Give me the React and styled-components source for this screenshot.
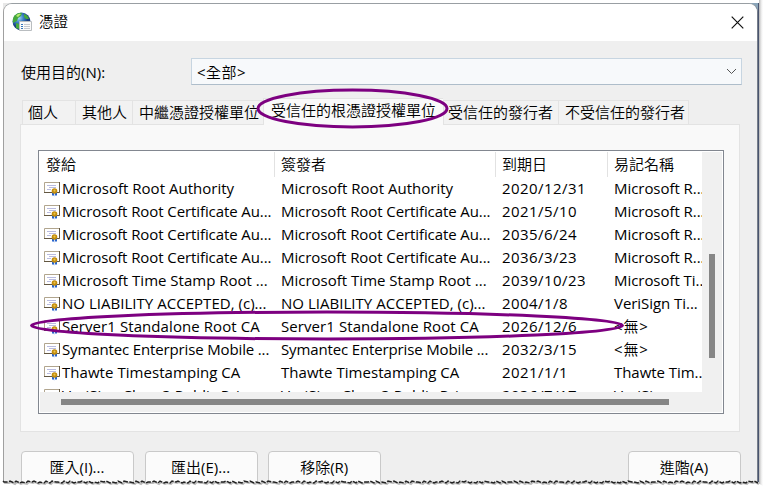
import React from "react";
import styled, { createGlobalStyle } from "styled-components";

const GlobalStyle = createGlobalStyle`
  * { box-sizing: border-box; }
  html, body { margin: 0; width: 763px; height: 486px; overflow: hidden; background: #fff; }
  body { font-family: "Open Sans", "Noto Sans CJK TC", sans-serif; font-size: 15px; font-weight: 350; color: #000; }
`;

const Page = styled.div`
  position: relative;
  width: 763px;
  height: 486px;
  padding: 3px 0 0 3px;
  overflow: hidden;
  background: linear-gradient(90deg, transparent 759px, #b5b5b5 759px, #e9e9e9 761px, #fff 763px);
`;
const Backdrop = styled.div`
  width: 756px;
  height: 479px;
  background: linear-gradient(90deg, #e8e8e8 300px, #8aa5b9 700px);
  border-right: 1px solid #49546f;
`;
const Window = styled.div`
  width: 755px;
  height: 479px;
  overflow: hidden;
  border: 1px solid #a0a0a0;
  border-top-color: #999fa3;
  border-right-color: #777f8b;
  border-bottom: 0;
  border-radius: 9px 9px 0 0;
  background: #efefef;
`;
const TitleBar = styled.header`
  display: flex;
  align-items: center;
  height: 37px;
  padding: 0 13px 0 8px;
  background: #fff;
`;
const Title = styled.h1`
  flex: 1;
  margin: -2px 0 0 6px;
  font-size: 14.5px;
  line-height: 20px;
  font-weight: 350;
`;
const CloseButton = styled.button`
  display: flex;
  padding: 0;
  border: 0;
  background: none;
`;
const Latin = styled.span`
  font-weight: 400;
`;
const PurposeRow = styled.div`
  display: flex;
  align-items: center;
  height: 27px;
  margin: 17px 14px 0 17px;
`;
const Label = styled.label`
  width: 170px;
  margin-top: -1px;
`;
const Select = styled.div`
  display: flex;
  align-items: center;
  justify-content: space-between;
  width: 551px;
  height: 27px;
  padding: 0 4px 1px 5px;
  border: 1px solid #c7d5e1;
  border-bottom-color: #aebdca;
  background: #f7f9fb;
  letter-spacing: 0.5px;
`;
const Tabs = styled.nav`
  display: flex;
  align-items: flex-end;
  height: 25px;
  margin: 14px 0 0 18px;
`;
const Tab = styled.div`
  flex: none;
  width: ${(p) => p.$width}px;
  height: ${(p) => (p.$active ? 27 : 24)}px;
  margin-bottom: ${(p) => (p.$active ? -1 : 0)}px;
  padding-left: ${(p) => p.$inset}px;
  border: solid #e3e3e3;
  border-width: 1px ${(p) => (p.$last ? 1 : 0)}px 0 1px;
  background: ${(p) => (p.$active ? "#f9f9f9" : "#f2f2f2")};
  line-height: 22px;
  white-space: nowrap;
  position: relative;
  z-index: ${(p) => (p.$active ? 1 : 0)};
`;
const Panel = styled.section`
  width: 720px;
  height: 308px;
  margin-left: 16px;
  padding: 25px 0 0 17px;
  border: 1px solid #e3e3e3;
  background: #f9f9f9;
`;
const List = styled.div`
  display: grid;
  grid-template-columns: 662px 20px;
  grid-template-rows: 240px 20px;
  width: 686px;
  height: 264px;
  padding: 1px;
  border: 1px solid #828790;
  background: #fff;
`;
const Viewport = styled.div`
  overflow: hidden;
`;
const Columns = styled.div`
  display: grid;
  grid-template-columns: 235px 221px 112px 94px;
`;
const HeaderRow = styled(Columns)`
  height: 25px;
`;
const HeaderCell = styled.div`
  padding-left: 6px;
  border-right: ${(p) => (p.$last ? 0 : 1)}px solid #e2e2e2;
  line-height: 25px;
  white-space: nowrap;
`;
const Row = styled(Columns)`
  height: 23px;
`;
const Cell = styled.div`
  display: flex;
  align-items: center;
  min-width: 0;
  padding-left: ${(p) => (p.$icon ? 4 : 6)}px;
  line-height: 23px;
  white-space: nowrap;
  overflow: hidden;
  font-weight: 400;
  letter-spacing: ${(p) => p.$spacing || 0}px;
`;
const NoneText = styled.span`
  font-weight: 350;
`;
const ScrollTrackY = styled.div`
  padding: 102px 0 0 7px;
  background: #f0f0f0;
`;
const ScrollTrackX = styled.div`
  grid-column: 1 / 3;
  padding: 7px 0 0 21px;
  background: #f0f0f0;
`;
const Thumb = styled.div`
  width: ${(p) => p.$width}px;
  height: ${(p) => p.$height}px;
  background: #868686;
`;
const Actions = styled.footer`
  display: flex;
  gap: 10.6px;
  margin: 19px 16px 0 17px;
`;
const Button = styled.button`
  width: 113px;
  height: 36px;
  padding: 0 1px 5px 0;
  border: 1px solid #c9c9c9;
  border-radius: 4px;
  background: #fbfbfb;
  color: #000;
  font: inherit;
  &:last-child { margin-left: auto; }
`;
const Annotations = styled.svg`
  position: absolute;
  inset: 0;
  z-index: 2;
  pointer-events: none;
`;

const GlobeIcon = () => (
  <svg width="21" height="21" viewBox="0 0 21 21">
    <defs>
      <radialGradient id="ocean" cx=".35" cy=".3">
        <stop offset="0" stopColor="#a9dcf7" />
        <stop offset=".5" stopColor="#3d83c7" />
        <stop offset="1" stopColor="#173d80" />
      </radialGradient>
    </defs>
    <circle cx="9.5" cy="9.5" r="9" fill="url(#ocean)" />
    <path d="M2 4Q6 0 10 1L9 4 6 6 5 9 1 11Q0 7 2 4ZM12 2Q16 3 17 7L14 7 12 5ZM4 11L7 12 7 17 4 16Z" fill="#45a83c" />
    <path d="M4 4Q6 1 9 2L6 5Z" fill="#b8eb70" />
    <path d="M7.500 9.500h12v9h-12z" fill="#fafafa" stroke="#b9bdc0" />
    <path d="M9 12.500h2M9 14.500h2M9 16.500h2" stroke="#3677bd" />
    <path d="M12 12.500h6M12 14.500h6M12 16.500h6" stroke="#c5c8ce" />
  </svg>
);

const CertificateSvg = styled.svg`
  flex: none;
`;
const CertificateIcon = () => (
  <CertificateSvg width="18" height="16" viewBox="0 0 18 16">
    <path d="M.5 1.500h15v10H.5z" fill="#fff" stroke="#b1a58e" />
    <path d="M0 11.500h15.500V1" fill="none" stroke="#625641" />
    <path d="M3 4.500h9M5 6.500h7M3 8.500h4" stroke="#b9bbdf" />
    <path d="M8 11h2.200v4.500L9 14l-1 1zM11 11h2v4l-1-1-1 1z" fill="#2864cc" />
    <circle cx="10.500" cy="10" r="2.800" fill="#c18b0b" />
    <circle cx="10.500" cy="9.700" r="1.100" fill="#ebc34d" />
  </CertificateSvg>
);

const tabs = [
  { name: "個人", width: 53, inset: 5 },
  { name: "其他人", width: 57, inset: 6 },
  { name: "中繼憑證授權單位", width: 131, inset: 6 },
  { name: "受信任的根憑證授權單位", width: 180, inset: 7, active: true },
  { name: "受信任的發行者", width: 115, inset: 4 },
  { name: "不受信任的發行者", width: 131, inset: 6, last: true },
];

const none = <>&lt;<NoneText>無</NoneText>&gt;</>;

const rows = [
  ["Microsoft Root Authority", "2020/12/31", "Microsoft R...", 0.02],
  ["Microsoft Root Certificate Au...", "2021/5/10", "Microsoft R...", -0.09],
  ["Microsoft Root Certificate Au...", "2035/6/24", "Microsoft R...", -0.09],
  ["Microsoft Root Certificate Au...", "2036/3/23", "Microsoft R...", -0.09],
  ["Microsoft Time Stamp Root ...", "2039/10/23", "Microsoft Ti...", 0],
  ["NO LIABILITY ACCEPTED, (c)...", "2004/1/8", "VeriSign Ti...", 0.03],
  ["Server1 Standalone Root CA", "2026/12/6", none, 0.08],
  ["Symantec Enterprise Mobile ...", "2032/3/15", none, -0.14],
  ["Thawte Timestamping CA", "2021/1/1", "Thawte Tim...", 0.05],
  ["VeriSign Class 3 Public Pri...", "2036/7/17", "VeriSign", 0],
];

const actions = [
  ["匯入", "(I)..."],
  ["匯出", "(E)..."],
  ["移除", "(R)"],
  ["進階", "(A)"],
];

const tornEdge = Array.from({ length: 126 }, (_, i) => {
  const x = 4 + i * 6;
  return `L${x} ${481 + (i % 3 === 0 ? 1 : 0)}L${x + 4} ${483 - (i % 4 === 0 ? 1 : 0)}`;
}).join("");

export default function App() {
  return (
    <>
      <GlobalStyle />
      <Page>
        <Backdrop>
          <Window>
            <TitleBar>
              <GlobeIcon />
              <Title>憑證</Title>
              <CloseButton aria-label="關閉">
                <svg width="13" height="13" viewBox="0 0 13 13">
                  <path d="M.7.7l11.600 11.600M12.300.7L.7 12.300" stroke="#111" strokeWidth="1.200" />
                </svg>
              </CloseButton>
            </TitleBar>
            <PurposeRow>
              <Label>使用目的<Latin>(N):</Latin></Label>
              <Select>
                <span><Latin>&lt;</Latin>全部<Latin>&gt;</Latin></span>
                <svg width="11" height="7" viewBox="0 0 11 7">
                  <path d="M1 1l4.500 4.500L10 1" fill="none" stroke="#555" />
                </svg>
              </Select>
            </PurposeRow>
            <Tabs>
              {tabs.map((t) => (
                <Tab key={t.name} $width={t.width} $inset={t.inset} $active={t.active} $last={t.last}>
                  {t.name}
                </Tab>
              ))}
            </Tabs>
            <Panel>
              <List>
                <Viewport>
                  <HeaderRow>
                    {["發給", "簽發者", "到期日", "易記名稱"].map((h, i) => (
                      <HeaderCell key={h} $last={i === 3}>{h}</HeaderCell>
                    ))}
                  </HeaderRow>
                  {rows.map(([name, date, friendly, spacing], i) => (
                    <Row key={i}>
                      <Cell $icon $spacing={spacing}><CertificateIcon />{name}</Cell>
                      <Cell $spacing={spacing}>{name}</Cell>
                      <Cell $spacing={0.45}>{date}</Cell>
                      <Cell $spacing={friendly === none ? 0.8 : -0.05}>{friendly}</Cell>
                    </Row>
                  ))}
                </Viewport>
                <ScrollTrackY><Thumb $width={6} $height={104} /></ScrollTrackY>
                <ScrollTrackX><Thumb $width={608} $height={6} /></ScrollTrackX>
              </List>
            </Panel>
            <Actions>
              {actions.map(([text, key]) => (
                <Button key={text}>{text}<Latin>{key}</Latin></Button>
              ))}
            </Actions>
          </Window>
        </Backdrop>
        <Annotations width="763" height="486" viewBox="0 0 763 486">
          <path d={`M3 481${tornEdge}L763 486H3Z`} fill="#fff" />
          <path d={`M3 481${tornEdge}`} fill="none" stroke="#bbb" strokeWidth="2" transform="translate(1 1)" />
          <path d={`M3 481${tornEdge}`} fill="none" stroke="#222" strokeWidth="1.400" strokeDasharray="5 1.500" />
          <g fill="none" stroke="#7d0080" strokeWidth="3">
            <ellipse cx="352.500" cy="108.500" rx="94.500" ry="18.500" />
            <ellipse cx="327" cy="325.500" rx="295.500" ry="13.500" />
          </g>
        </Annotations>
      </Page>
    </>
  );
}
